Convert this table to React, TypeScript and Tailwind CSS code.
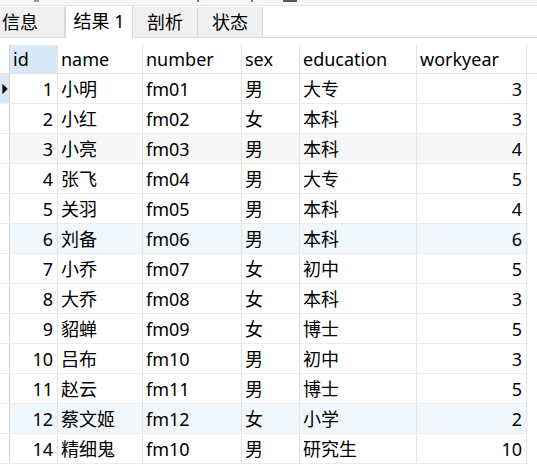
import React from "react";

type Row = {
    id: number;
    name: string;
    number: string;
    sex: string;
    education: string;
    workyear: number;
};

const rows: Row[] = [
    { id: 1, name: "小明", number: "fm01", sex: "男", education: "大专", workyear: 3 },
    { id: 2, name: "小红", number: "fm02", sex: "女", education: "本科", workyear: 3 },
    { id: 3, name: "小亮", number: "fm03", sex: "男", education: "本科", workyear: 4 },
    { id: 4, name: "张飞", number: "fm04", sex: "男", education: "大专", workyear: 5 },
    { id: 5, name: "关羽", number: "fm05", sex: "男", education: "本科", workyear: 4 },
    { id: 6, name: "刘备", number: "fm06", sex: "男", education: "本科", workyear: 6 },
    { id: 7, name: "小乔", number: "fm07", sex: "女", education: "初中", workyear: 5 },
    { id: 8, name: "大乔", number: "fm08", sex: "女", education: "本科", workyear: 3 },
    { id: 9, name: "貂蝉", number: "fm09", sex: "女", education: "博士", workyear: 5 },
    { id: 10, name: "吕布", number: "fm10", sex: "男", education: "初中", workyear: 3 },
    { id: 11, name: "赵云", number: "fm11", sex: "男", education: "博士", workyear: 5 },
    { id: 12, name: "蔡文姬", number: "fm12", sex: "女", education: "小学", workyear: 2 },
    { id: 14, name: "精细鬼", number: "fm10", sex: "男", education: "研究生", workyear: 10 },
];

const tabs = ["信息", "结果 1", "剖析", "状态"];

function rowBg(i: number) {
    if (i === 2) return "bg-[#f7f7f7]";
    if (i === 5 || i === 11) return "bg-[#f2f7fc]";
    return "bg-white";
}

export default function App() {
    return (
        <div
            className="w-[537px] h-[472px] bg-white text-black overflow-hidden text-[18px] leading-none"
            style={{ fontFamily: '"Noto Sans", "Noto Sans CJK SC", sans-serif' }}
        >
            {/* cut-off strip at the very top */}
            <div className="h-[6px] bg-[#f6f6f6] border-b border-[#e6e6e6] flex items-start">
                <span className="ml-[34px] w-[5px] h-[2px] bg-[#9a9a9a]" />
                <span className="ml-[158px] w-[2px] h-[2px] bg-[#3c7fd6]" />
                <span className="ml-[52px] w-[2px] h-[2px] bg-[#3c7fd6]" />
                <span className="ml-[30px] w-[14px] h-[2px] bg-[#555]" />
            </div>

            {/* tab bar */}
            <div className="h-[32px] flex items-end border-b border-[#d9d9d9]">
                {tabs.map((t, i) =>
                    i === 1 ? (
                        <div
                            key={t}
                            className="h-[32px] w-[68px] bg-white border-x border-[#d9d9d9] flex items-center justify-center -mb-px pb-[2px]"
                        >
                            {t}
                        </div>
                    ) : (
                        <div
                            key={t}
                            className={`h-[30px] w-[65px] bg-[#f0f0f0] border-r border-[#d9d9d9] flex items-center ${i === 0 ? "w-[61px] pl-[2px]" : "justify-center"}`}
                        >
                            {t}
                        </div>
                    )
                )}
            </div>

            {/* grid */}
            <div className="mt-[7px]">
                <div className="flex h-[29px] border-b border-[#e4e4e4]">
                    <div className="w-[10px] border-r border-[#d4d4d4]" />
                    <div className="w-[48px] bg-[#d9e9f7] border-r border-[#e4e4e4] flex items-center pl-[3px]">id</div>
                    <div className="w-[85px] border-r border-[#e4e4e4] flex items-center pl-[3px]">name</div>
                    <div className="w-[99px] border-r border-[#e4e4e4] flex items-center pl-[3px]">number</div>
                    <div className="w-[58px] border-r border-[#e4e4e4] flex items-center pl-[3px]">sex</div>
                    <div className="w-[117px] border-r border-[#e4e4e4] flex items-center pl-[3px]">education</div>
                    <div className="w-[110px] border-r border-[#e4e4e4] flex items-center pl-[3px]">workyear</div>
                </div>
                {rows.map((r, i) => (
                    <div key={r.id} className={`flex h-[30px] border-b border-[#ececec] w-[528px] ${rowBg(i)}`}>
                        <div
                            className={`w-[10px] border-r border-[#d4d4d4] flex items-center ${i === 0 ? "bg-[#d9e9f7]" : "bg-white"}`}
                        >
                            {i === 0 && (
                                <svg width="8" height="14" viewBox="0 0 8 14" className="ml-[2px]">
                                    <path d="M0.5 1 L6.5 7 L0.5 13 Z" fill="#000" />
                                </svg>
                            )}
                        </div>
                        <div className="w-[48px] border-r border-[#e4e4e4] flex items-center justify-end pr-[4px]">{r.id}</div>
                        <div className="w-[85px] border-r border-[#e4e4e4] flex items-center pl-[3px]">{r.name}</div>
                        <div className="w-[99px] border-r border-[#e4e4e4] flex items-center pl-[3px]">{r.number}</div>
                        <div className="w-[58px] border-r border-[#e4e4e4] flex items-center pl-[3px]">{r.sex}</div>
                        <div className="w-[117px] border-r border-[#e4e4e4] flex items-center pl-[3px]">{r.education}</div>
                        <div className="w-[110px] border-r border-[#e4e4e4] flex items-center justify-end pr-[4px]">{r.workyear}</div>
                    </div>
                ))}
            </div>
        </div>
    );
}
